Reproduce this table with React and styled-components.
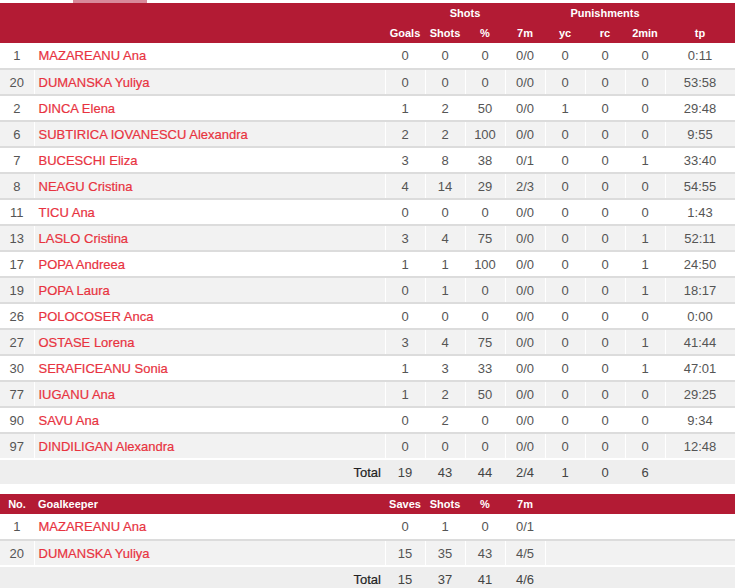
import React from 'react'
import styled, { createGlobalStyle } from 'styled-components'

const GlobalStyle = createGlobalStyle`
  body {
    margin: 0;
    background: #fff;
    font-family: "Liberation Sans", Arial, sans-serif;
  }
`

const players = [
  [1, 'MAZAREANU Ana', 0, 0, 0, '0/0', 0, 0, 0, '0:11'],
  [20, 'DUMANSKA Yuliya', 0, 0, 0, '0/0', 0, 0, 0, '53:58'],
  [2, 'DINCA Elena', 1, 2, 50, '0/0', 1, 0, 0, '29:48'],
  [6, 'SUBTIRICA IOVANESCU Alexandra', 2, 2, 100, '0/0', 0, 0, 0, '9:55'],
  [7, 'BUCESCHI Eliza', 3, 8, 38, '0/1', 0, 0, 1, '33:40'],
  [8, 'NEAGU Cristina', 4, 14, 29, '2/3', 0, 0, 0, '54:55'],
  [11, 'TICU Ana', 0, 0, 0, '0/0', 0, 0, 0, '1:43'],
  [13, 'LASLO Cristina', 3, 4, 75, '0/0', 0, 0, 1, '52:11'],
  [17, 'POPA Andreea', 1, 1, 100, '0/0', 0, 0, 1, '24:50'],
  [19, 'POPA Laura', 0, 1, 0, '0/0', 0, 0, 1, '18:17'],
  [26, 'POLOCOSER Anca', 0, 0, 0, '0/0', 0, 0, 0, '0:00'],
  [27, 'OSTASE Lorena', 3, 4, 75, '0/0', 0, 0, 1, '41:44'],
  [30, 'SERAFICEANU Sonia', 1, 3, 33, '0/0', 0, 0, 1, '47:01'],
  [77, 'IUGANU Ana', 1, 2, 50, '0/0', 0, 0, 0, '29:25'],
  [90, 'SAVU Ana', 0, 2, 0, '0/0', 0, 0, 0, '9:34'],
  [97, 'DINDILIGAN Alexandra', 0, 0, 0, '0/0', 0, 0, 0, '12:48'],
]

const keepers = [
  [1, 'MAZAREANU Ana', 0, 1, 0, '0/1'],
  [20, 'DUMANSKA Yuliya', 15, 35, 43, '4/5'],
]

const Tabs = styled.div`
  height: 3px;
  display: flex;
`

const Tab = styled.span`
  margin-left: 73px;
  width: 74px;
  background: #d8899a;
`

const Table = styled.table`
  width: 735px;
  border-collapse: collapse;
  table-layout: fixed;
  font-size: 13px;
  margin-bottom: ${({gap}) => gap || 0}px;
`

const HeadRow = styled.tr`
  background: #b31b34;
  height: 20px;
`

const Th = styled.th`
  color: #fff;
  font-size: 11px;
  font-weight: bold;
  padding: 0 4px;
  text-align: ${({align}) => align || 'center'};
  white-space: nowrap;
`

const Row = styled.tr`
  height: 26px;
  background: ${({odd}) => odd ? '#f2f2f2' : '#fff'};
  border-bottom: 2px solid ${({last}) => last ? '#fff' : '#dcdcdc'};
`

const TotalRow = styled.tr`
  height: 25px;
  background: #eee;
`

const NoCell = styled.td`
  text-align: center;
  color: #555;
  border-right: 1px solid #fff;
  padding: 0;
`

const NameCell = styled.td`
  color: #e8333f;
  padding: 0 4px;
  border-right: 1px solid #fff;
  white-space: nowrap;
  -webkit-text-stroke: 0.2px #e8333f;
`

const Cell = styled.td`
  text-align: center;
  color: #555;
  padding: 0;
  border-right: 1px solid #fff;
`

const TotalLabel = styled.td`
  text-align: right;
  color: #222;
  padding: 0 4px;
  -webkit-text-stroke: 0.2px #222;
`

const TotalCell = styled.td`
  text-align: center;
  color: #444;
  padding: 0;
`

const Cols = ({count, rest}) => (
  <colgroup>
    <col style={{width: 34}} />
    <col style={{width: 351}} />
    {Array.from({length: count}, (_, i) => <col key={i} style={{width: 40}} />)}
    <col style={{width: rest}} />
  </colgroup>
)

const Players = () => (
  <Table gap={10}>
    <Cols count={7} rest={70} />
    <thead>
      <HeadRow>
        <Th />
        <Th />
        <Th colSpan={4}>Shots</Th>
        <Th colSpan={3}>Punishments</Th>
        <Th />
      </HeadRow>
      <HeadRow>
        <Th />
        <Th />
        {['Goals', 'Shots', '%', '7m', 'yc', 'rc', '2min', 'tp'].map(h => <Th key={h}>{h}</Th>)}
      </HeadRow>
    </thead>
    <tbody>
      {players.map((p, index) =>
        <Row key={index} odd={index % 2 === 1} last={index === players.length - 1}>
          <NoCell>{p[0]}</NoCell>
          <NameCell>{p[1]}</NameCell>
          {p.slice(2).map((v, i) => <Cell key={i}>{v}</Cell>)}
        </Row>
      )}
      <TotalRow>
        <td />
        <TotalLabel>Total</TotalLabel>
        {[19, 43, 44, '2/4', 1, 0, 6, ''].map((v, i) => <TotalCell key={i}>{v}</TotalCell>)}
      </TotalRow>
    </tbody>
  </Table>
)

const Keepers = () => (
  <Table>
    <Cols count={4} rest={190} />
    <thead>
      <HeadRow>
        <Th>No.</Th>
        <Th align="left">Goalkeeper</Th>
        {['Saves', 'Shots', '%', '7m'].map(h => <Th key={h}>{h}</Th>)}
        <Th />
      </HeadRow>
    </thead>
    <tbody>
      {keepers.map((k, index) =>
        <Row key={index} odd={index % 2 === 1} last={index === keepers.length - 1}>
          <NoCell>{k[0]}</NoCell>
          <NameCell>{k[1]}</NameCell>
          {k.slice(2).map((v, i) => <Cell key={i}>{v}</Cell>)}
          <td />
        </Row>
      )}
      <TotalRow>
        <td />
        <TotalLabel>Total</TotalLabel>
        {[15, 37, 41, '4/6'].map((v, i) => <TotalCell key={i}>{v}</TotalCell>)}
        <td />
      </TotalRow>
    </tbody>
  </Table>
)

const App = () => (
  <>
    <GlobalStyle />
    <Tabs><Tab /></Tabs>
    <Players />
    <Keepers />
  </>
)

export default App
